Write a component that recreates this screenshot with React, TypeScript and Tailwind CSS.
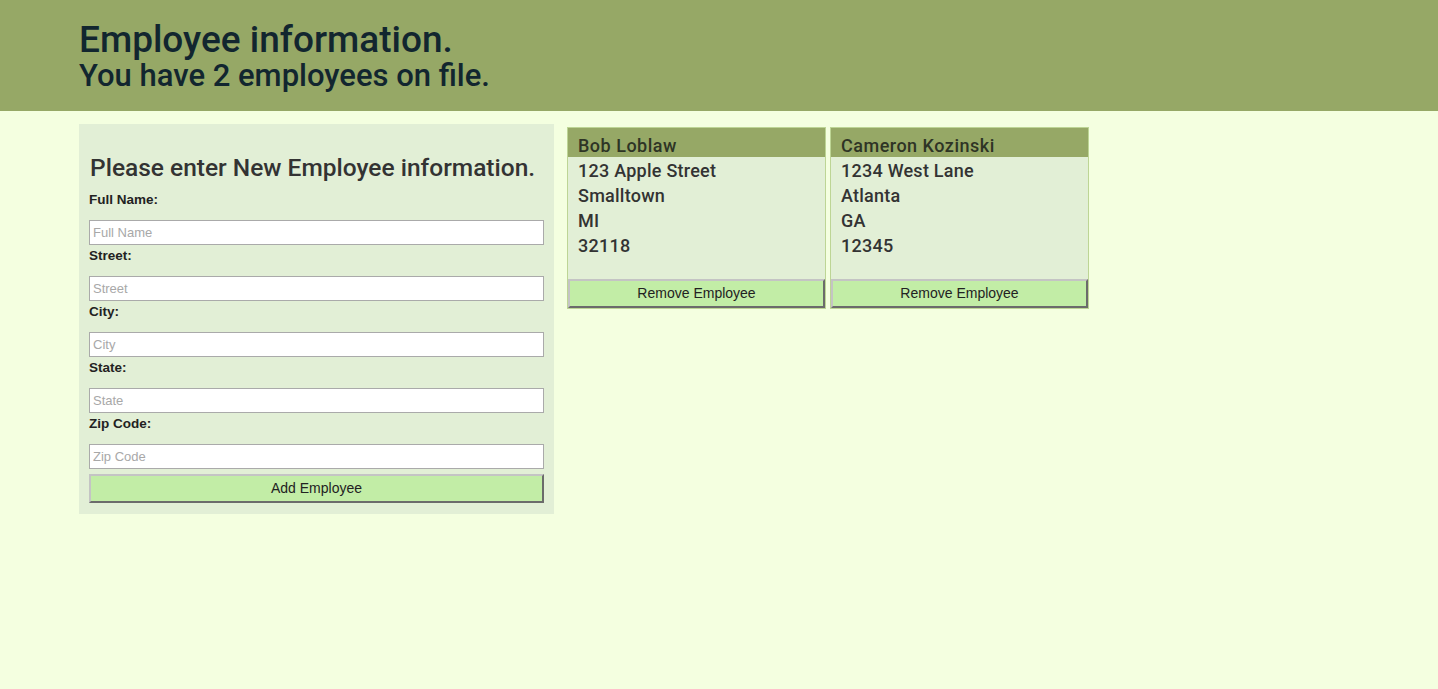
const employees = [
  { name: "Bob Loblaw", street: "123 Apple Street", city: "Smalltown", state: "MI", zip: "32118" },
  { name: "Cameron Kozinski", street: "1234 West Lane", city: "Atlanta", state: "GA", zip: "12345" },
];

const fields = ["Full Name", "Street", "City", "State", "Zip Code"];

const btn =
  "w-full bg-[#c2eda6] text-[#222] text-[14px] font-['Liberation_Sans',Arial,sans-serif] border-2 border-t-[#c4c4c4] border-l-[#c4c4c4] border-b-[#6b6b6b] border-r-[#6b6b6b]";

export default function App() {
  return (
    <div className="min-h-screen bg-[#f4ffe0] font-['Roboto','Liberation_Sans',Arial,sans-serif]">
      <header className="bg-[#96a866] h-[111px] pt-[20px] pl-[79px] text-[#12262f] font-medium">
        <h1 className="text-[37px] leading-[40px]">Employee information.</h1>
        <h2 className="text-[31px] leading-[32px]">You have {employees.length} employees on file.</h2>
      </header>

      <main className="flex items-start gap-[13px] pl-[79px] pt-[13px]">
        <form className="w-[475px] bg-[#e2efd6] px-[10px] pt-[29px] pb-[11px] text-[#333]">
          <h3 className="text-[24.5px] font-medium leading-[30px] pl-px mb-[6px]">Please enter New Employee information.</h3>
          {fields.map((f) => (
            <div key={f}>
              <label className="block text-[13.5px] font-bold leading-[22px] text-[#222] mb-[9px] font-['Liberation_Sans',Arial,sans-serif]">
                {f}:
              </label>
              <input
                placeholder={f}
                className="block w-full h-[25px] bg-white border border-[#aaa] px-[3px] text-[13px] font-['Liberation_Sans',Arial,sans-serif] placeholder:text-[#a8a8a8] outline-none"
              />
            </div>
          ))}
          <button type="button" className={btn + " h-[29px] mt-[5px]"}>
            Add Employee
          </button>
        </form>

        <div className="flex gap-[4px] mt-[3px]">
          {employees.map((e) => (
            <div key={e.name} className="w-[259px] border border-[#bdd595] bg-[#e2efd6] text-[#333]">
              <div className="bg-[#96a866] h-[29px] pt-[7px] px-[10px] text-[18px] tracking-[0.5px] font-medium leading-[21px] text-[#2e3425]">
                {e.name}
              </div>
              <div className="px-[10px] pt-px text-[18px] tracking-[0.25px] font-medium leading-[25px] h-[122px]">
                <div>{e.street}</div>
                <div>{e.city}</div>
                <div>{e.state}</div>
                <div>{e.zip}</div>
              </div>
              <button type="button" className={btn + " h-[29px]"}>
                Remove Employee
              </button>
            </div>
          ))}
        </div>
      </main>
    </div>
  );
}
